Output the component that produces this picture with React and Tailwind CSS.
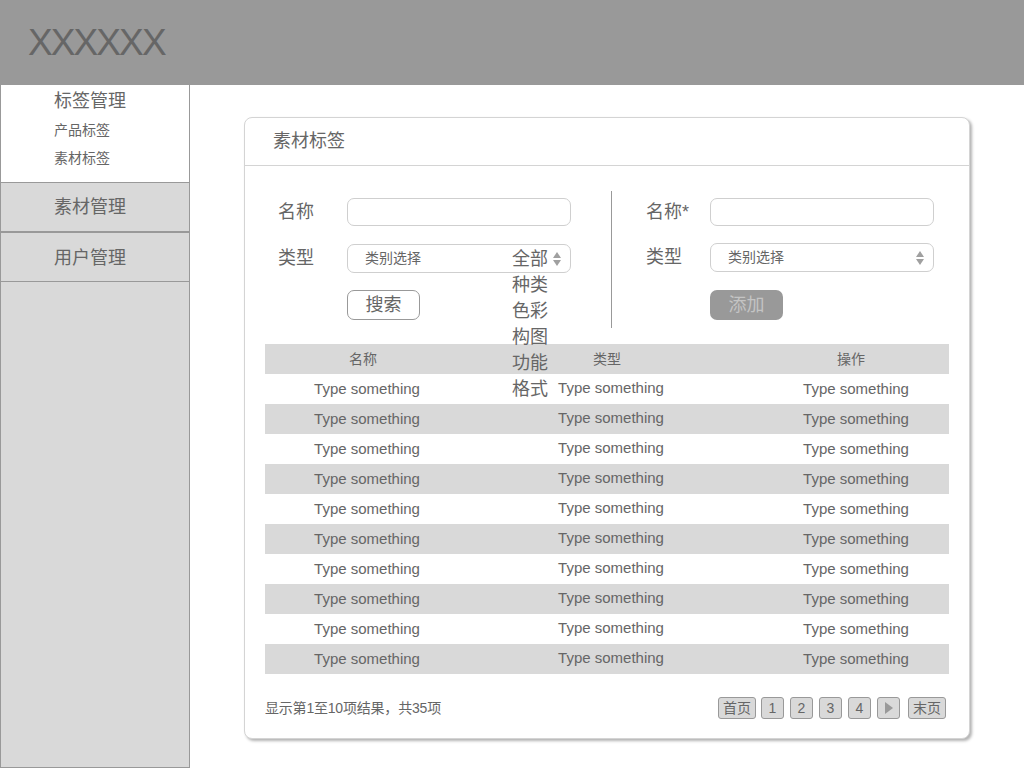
import React from "react";

const FONT = { fontFamily: '"Liberation Sans", "Noto Sans CJK SC", sans-serif' };

function Arrows() {
  return (
    <svg width="8" height="16" viewBox="0 0 8 16" className="shrink-0">
      <path d="M4 1 L8 7 L0 7 Z" fill="#a0a0a0" />
      <path d="M0 9 L8 9 L4 15 Z" fill="#a0a0a0" />
    </svg>
  );
}

function Select({ children }) {
  return (
    <div className="relative w-[224px] h-[29px] border border-[#cfcfcf] rounded-[7px] bg-white flex items-center justify-between pl-[17px] pr-[9px]">
      <span className="text-[14px] text-[#666]">类别选择</span>
      <Arrows />
      {children}
    </div>
  );
}

const rows = Array.from({ length: 10 });

export default function App() {
  return (
    <div className="w-[1024px] h-[768px] bg-white overflow-hidden text-[#666]" style={FONT}>
      <div className="h-[85px] bg-[#999999] flex items-center pl-[28px]">
        <span className="text-[37px] tracking-[-1.9px] text-[#666] leading-none">XXXXXX</span>
      </div>
      <div className="flex h-[683px]">
        <div className="w-[190px] h-full border border-t-0 border-[#999] bg-[#d9d9d9] flex flex-col">
          <div className="bg-white h-[98px] border-b border-[#999] pl-[53px] pt-[4px]">
            <div className="text-[18px] leading-[24px]">标签管理</div>
            <div className="text-[14px] leading-[20px] mt-[7px]">产品标签</div>
            <div className="text-[14px] leading-[20px] mt-[8px]">素材标签</div>
          </div>
          <div className="h-[50px] border-b-2 border-[#999] pl-[53px] flex items-center text-[18px] pt-[1px]">素材管理</div>
          <div className="h-[49px] border-b border-[#999] pl-[53px] flex items-center text-[18px] pt-[2px]">用户管理</div>
        </div>
        <div className="flex-1 pl-[54px] pt-[32px]">
          <div className="w-[726px] h-[622px] border border-[#d4d4d4] rounded-[8px] bg-white shadow-[2px_2px_3px_rgba(0,0,0,0.3)]">
            <div className="h-[48px] border-b border-[#d4d4d4] flex items-center pl-[28px] text-[18px]">素材标签</div>
            <div className="flex pl-[33px] pt-[25px]">
              <div className="w-[293px] pt-[7px]">
                <div className="flex items-center h-[28px]">
                  <span className="w-[69px] text-[18px]">名称</span>
                  <div className="w-[224px] h-[28px] border border-[#cfcfcf] rounded-[7px]" />
                </div>
                <div className="flex items-center mt-[18px] h-[29px]">
                  <span className="w-[69px] text-[18px]">类型</span>
                  <Select>
                    <div className="absolute left-[164px] top-[1px] z-10 text-[18px] leading-[26px] text-[#666]">
                      <div>全部</div>
                      <div>种类</div>
                      <div>色彩</div>
                      <div>构图</div>
                      <div>功能</div>
                      <div>格式</div>
                    </div>
                  </Select>
                </div>
                <div className="mt-[17px] ml-[69px] w-[73px] h-[30px] border border-[#999] rounded-[7px] flex items-center justify-center text-[18px]">搜索</div>
              </div>
              <div className="ml-[40px] w-px h-[137px] bg-[#999]" />
              <div className="ml-[34px] pt-[7px]">
                <div className="flex items-center h-[28px]">
                  <span className="w-[64px] text-[18px]">名称*</span>
                  <div className="w-[224px] h-[28px] border border-[#cfcfcf] rounded-[7px]" />
                </div>
                <div className="flex items-center mt-[17px] h-[29px]">
                  <span className="w-[64px] text-[18px]">类型</span>
                  <Select />
                </div>
                <div className="mt-[18px] ml-[64px] w-[73px] h-[30px] bg-[#999] rounded-[7px] flex items-center justify-center text-[18px] text-[#c4c4c4]">添加</div>
              </div>
            </div>
            <div className="mx-[20px] mt-[16px] text-[14px]">
              <div className="flex h-[30px] items-center bg-[#d9d9d9]">
                <div className="w-[196px] text-center">名称</div>
                <div className="w-[292px] text-center">类型</div>
                <div className="w-[196px] text-center">操作</div>
              </div>
              {rows.map((_, i) => (
                <div key={i} className={`flex h-[30px] items-center text-[15px] ${i % 2 === 1 ? "bg-[#d9d9d9]" : "bg-white"}`}>
                  <div className="w-[204px] text-center">Type something</div>
                  <div className="w-[284px] text-center -mt-[2px]">Type something</div>
                  <div className="w-[196px] text-center pl-[10px]">Type something</div>
                </div>
              ))}
            </div>
            <div className="flex items-center justify-between mt-[23px] pl-[20px] pr-[23px] h-[22px] text-[14px]">
              <span className="tracking-[-0.2px]">显示第1至10项结果，共35项</span>
              <div className="flex items-center">
                <div className="w-[38px] h-[22px] bg-[#d9d9d9] border border-[#999] rounded-[3px] flex items-center justify-center">首页</div>
                <div className="ml-[5px] w-[23px] h-[22px] bg-[#d9d9d9] border border-[#999] rounded-[3px] flex items-center justify-center">1</div>
                <div className="ml-[6px] w-[23px] h-[22px] bg-[#d9d9d9] border border-[#999] rounded-[3px] flex items-center justify-center">2</div>
                <div className="ml-[6px] w-[23px] h-[22px] bg-[#d9d9d9] border border-[#999] rounded-[3px] flex items-center justify-center">3</div>
                <div className="ml-[6px] w-[23px] h-[22px] bg-[#d9d9d9] border border-[#999] rounded-[3px] flex items-center justify-center">4</div>
                <div className="ml-[6px] w-[23px] h-[22px] bg-[#d9d9d9] border border-[#999] rounded-[3px] flex items-center justify-center">
                  <svg width="8" height="12" viewBox="0 0 8 12"><path d="M0 0 L8 6 L0 12 Z" fill="#999" /></svg>
                </div>
                <div className="ml-[8px] w-[38px] h-[22px] bg-[#d9d9d9] border border-[#999] rounded-[3px] flex items-center justify-center">末页</div>
              </div>
            </div>
          </div>
        </div>
      </div>
    </div>
  );
}
